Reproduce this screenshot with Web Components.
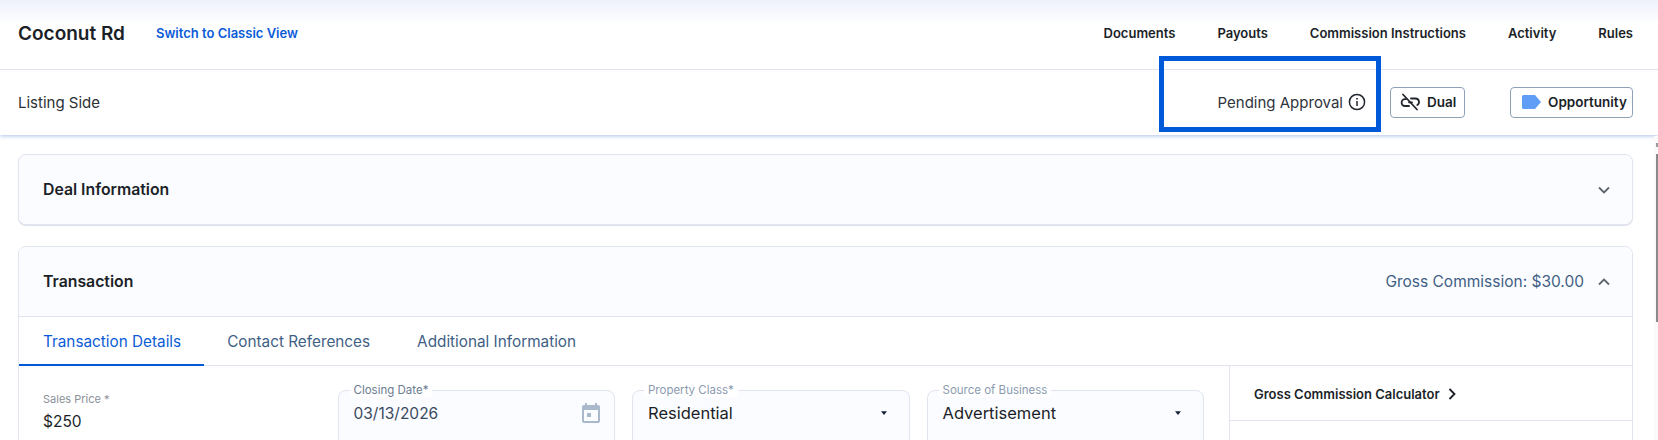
<!DOCTYPE html>
<html>
<head>
<meta charset="utf-8">
<title>Coconut Rd</title>
<style>
  html, body { margin: 0; height: 440px; overflow: hidden; background: #fff; }
  body { font-family: Inter, "Liberation Sans", sans-serif; color: #1b1f27; }
</style>
</head>
<body>
<deal-page></deal-page>

<template id="top-bar-tpl">
  <style>
    :host { display: block; position: relative; height: 135px; background: #fff; box-shadow: 0 1px 4px rgba(70, 120, 210, .45); }
    .row1 {
      height: 66px; padding: 0 25px 3px 18px; display: flex; align-items: center;
      background: linear-gradient(#edf1fb, #fff 24px); border-bottom: 1px solid #e0e4ee;
    }
    .title { font-size: 19px; font-weight: 600; }
    .switch { margin-left: 31px; font-size: 13px; font-weight: 600; color: #0b5bd7; }
    nav { margin-left: auto; display: flex; gap: 42px; font-size: 13px; font-weight: 600; }
    .row2 { height: 65px; padding: 0 25px 1px 18px; box-sizing: border-box; display: flex; align-items: center; font-size: 15px; }
    .side { color: #2c3038; }
    .right { margin-left: auto; display: flex; align-items: center; }
    .pending { display: flex; align-items: center; gap: 5px; color: #30343c; margin-right: 24px; }
    .btn {
      display: flex; align-items: center; height: 31px; box-sizing: border-box;
      border: 1px solid #8fa1b8; border-radius: 4px; font-size: 13.500px; font-weight: 600;
    }
    .dual { width: 75px; padding-left: 9px; gap: 6px; }
    .opp { width: 123px; padding-left: 11px; gap: 6px; margin-left: 45px; }
    svg { display: block; flex: none; }
    .mark {
      position: absolute; left: 1159px; top: 56px; width: 222px; height: 76px;
      box-sizing: border-box; border: 5px solid #0059d9;
    }
  </style>
  <div class="row1">
    <span class="title">Coconut Rd</span>
    <span class="switch">Switch to Classic View</span>
    <nav><span>Documents</span><span>Payouts</span><span>Commission Instructions</span><span>Activity</span><span>Rules</span></nav>
  </div>
  <div class="row2">
    <span class="side">Listing Side</span>
    <div class="right">
      <span class="pending">Pending Approval
        <svg width="18" height="18" viewBox="0 0 18 18" fill="none" stroke="#22262e" stroke-width="1.5"><circle cx="9" cy="9" r="7.6"/><path d="M9 8v5"/><path d="M9 5v1.5" stroke-width="1.7"/></svg>
      </span>
      <span class="btn dual">
        <svg width="21" height="18" viewBox="0 0 21 18" fill="none" stroke="#22262e" stroke-width="1.8" stroke-linecap="round"><path d="M3 1.500l14 15"/><path d="M6 6.200H5a3.400 3.400 0 0 0 0 6.800h4"/><path d="M11 5.500h4.500a3.500 3.500 0 0 1 1.800 6.500"/><path d="M9 9.300h3"/></svg>
        Dual
      </span>
      <span class="btn opp">
        <svg width="20" height="14" viewBox="0 0 20 14"><path d="M1.500 0H13l6 7-6 7H1.500A1.500 1.500 0 0 1 0 12.500v-11A1.500 1.500 0 0 1 1.500 0z" fill="#5f9df7"/></svg>
        Opportunity
      </span>
    </div>
    </div>
  <div class="mark"></div>
</template>

<template id="fold-card-tpl">
  <style>
    :host { display: block; border: 1px solid #e0e4ee; border-radius: 8px; overflow: hidden; background: #fff; }
    header {
      height: 69px; padding: 0 22px 0 24px; display: flex; align-items: center; background: #fbfcff;
    }
    :host([closed]) { box-shadow: 0 1px 1px rgba(120, 130, 160, .25); }
    :host(:not([closed])) header { border-bottom: 1px solid #e0e4ee; }
    .name { font-size: 15.800px; font-weight: 600; }
    .extra { margin-left: auto; font-size: 15.500px; color: #3f5f85; }
    svg { margin-left: 14px; display: block; }
    .extra:empty + svg { margin-left: auto; }
  </style>
  <header>
    <span class="name"></span>
    <span class="extra"></span>
    <svg width="12" height="8" viewBox="0 0 12 8" fill="none" stroke="#5c6470" stroke-width="1.8"><path class="chev" d="M1 1.500l5 5 5-5"/></svg>
  </header>
  <slot></slot>
</template>

<template id="tab-bar-tpl">
  <style>
    :host { display: flex; height: 48px; border-bottom: 1px solid #e0e4ee; font-size: 15.300px; color: #3f5f85; }
    span { padding: 0 24px; display: flex; align-items: center; margin-right: -1px; }
    .on { color: #0b5bd7; box-shadow: inset 0 -2px 0 #0059d9; margin-bottom: -1px; padding-right: 23px; }
  </style>
  <span class="on">Transaction Details</span><span>Contact References</span><span>Additional Information</span>
</template>

<template id="float-field-tpl">
  <style>
    :host { display: block; position: relative; height: 58px; box-sizing: border-box; margin-top: 24px; border: 1px solid #e0e4ee; border-radius: 8px; background: #fbfcff; }
    label {
      position: absolute; left: 11px; top: -7px; padding: 0 4px; background: #fff;
      font-size: 11.500px; line-height: 13px; color: #8c9bb0;
    }
    :host([dark]) label { color: #6b7b90; }
    .row { display: flex; align-items: center; height: 44px; padding: 0 22px 0 15px; font-size: 16.500px; color: #1b1f27; }
    :host([dark]) .row { color: #3a4a60; padding-right: 14px; font-size: 15.500px; }
    ::slotted(svg) { margin-left: auto; }
  </style>
  <label></label>
  <div class="row"><span class="val"></span><slot></slot></div>
</template>

<template id="deal-page-tpl">
  <style>
    :host { display: block; }
    main { padding: 19px 25px 0 18px; display: flex; flex-direction: column; gap: 21px; }
    .body { display: grid; grid-template-columns: 1fr 402px; }
    .fields { display: grid; grid-template-columns: repeat(4, 1fr); gap: 17px; padding: 0 25px 0 24px; border-right: 1px solid #e0e4ee; height: 120px; }
    .sales { padding-top: 26px; }
    .sales small { display: block; font-size: 11px; line-height: 14px; color: #8a8f98; }
    .sales b { display: block; font-weight: 400; font-size: 15.500px; margin-top: 6px; }
    .calc { height: 55px; border-bottom: 1px solid #e0e4ee; padding: 1px 0 0 24px; box-sizing: border-box; display: flex; align-items: center; gap: 8px; font-size: 13px; font-weight: 600; }
    .track { position: absolute; left: 1654px; top: 136px; width: 4px; height: 304px; background: #fafafa; }
    .arrow { position: absolute; left: 1656px; top: 143px; width: 2px; height: 4px; background: #9a9a9a; }
    .thumb { position: absolute; left: 1656px; top: 154px; width: 2px; height: 168px; background: #8a8a8a; }
  </style>
  <top-bar></top-bar>
  <main>
    <fold-card title="Deal Information" closed></fold-card>
    <fold-card title="Transaction" extra="Gross Commission: $30.00">
      <tab-bar></tab-bar>
      <div class="body">
        <div class="fields">
          <div class="sales"><small>Sales Price *</small><b>$250</b></div>
          <float-field label="Closing Date*" value="03/13/2026" dark>
            <svg width="18" height="20" viewBox="0 0 18 20" fill="#a9b8ca"><path d="M3 0h2v2h8V0h2v2h1a2 2 0 0 1 2 2v14a2 2 0 0 1-2 2H2a2 2 0 0 1-2-2V4a2 2 0 0 1 2-2h1zM2 7v11h14V7z"/><rect x="5" y="10" width="4" height="4"/></svg>
          </float-field>
          <float-field label="Property Class*" value="Residential">
            <svg width="6" height="4" viewBox="0 0 8 5" fill="#14233a"><path d="M0 0h8L4 5z"/></svg>
          </float-field>
          <float-field label="Source of Business" value="Advertisement">
            <svg width="6" height="4" viewBox="0 0 8 5" fill="#14233a"><path d="M0 0h8L4 5z"/></svg>
          </float-field>
        </div>
        <div class="side">
          <div class="calc">Gross Commission Calculator
            <svg width="8" height="12" viewBox="0 0 8 12" fill="none" stroke="#1b1f27" stroke-width="1.8"><path d="M1.500 1l5 5-5 5"/></svg>
          </div>
        </div>
      </div>
    </fold-card>
  </main>
  <div class="track"></div>
  <div class="arrow"></div>
  <div class="thumb"></div>
</template>

<script>
function mount(el, id) {
  const root = el.attachShadow({ mode: 'open' });
  root.appendChild(document.getElementById(id).content.cloneNode(true));
  return root;
}

class TopBar extends HTMLElement {
  constructor() { super(); mount(this, 'top-bar-tpl'); }
}

class TabBar extends HTMLElement {
  constructor() { super(); mount(this, 'tab-bar-tpl'); }
}

class FoldCard extends HTMLElement {
  constructor() { super(); mount(this, 'fold-card-tpl'); }
  connectedCallback() {
    const root = this.shadowRoot;
    root.querySelector('.name').textContent = this.getAttribute('title');
    root.querySelector('.extra').textContent = this.getAttribute('extra') || '';
    // open cards point the chevron up
    if (!this.hasAttribute('closed')) root.querySelector('.chev').setAttribute('d', 'M1 6.500l5-5 5 5');
  }
}

class FloatField extends HTMLElement {
  constructor() { super(); mount(this, 'float-field-tpl'); }
  connectedCallback() {
    this.shadowRoot.querySelector('label').textContent = this.getAttribute('label');
    this.shadowRoot.querySelector('.val').textContent = this.getAttribute('value');
  }
}

class DealPage extends HTMLElement {
  constructor() { super(); mount(this, 'deal-page-tpl'); }
}

customElements.define('top-bar', TopBar);
customElements.define('tab-bar', TabBar);
customElements.define('fold-card', FoldCard);
customElements.define('float-field', FloatField);
customElements.define('deal-page', DealPage);
</script>
</body>
</html>
